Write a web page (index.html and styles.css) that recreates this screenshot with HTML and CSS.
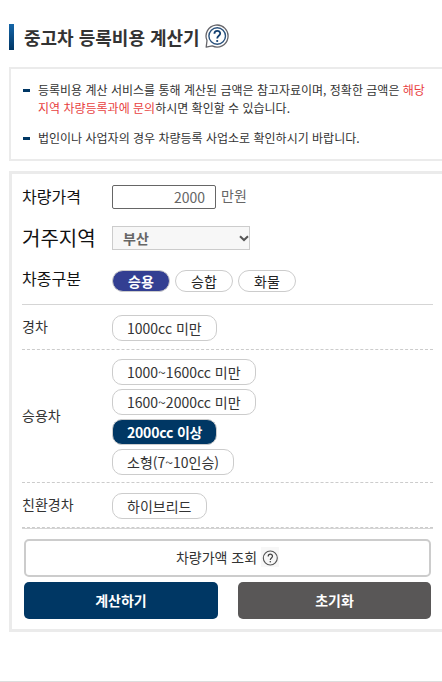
FILE: index.html
```
<!DOCTYPE html>
<html lang="ko">

<head>
	<meta charset="utf-8" />
	<title>중고차 등록비용 계산기</title>
	<meta name="viewport" content="width=device-width, initial-scale=1" />
	<link rel="stylesheet" href="styles.css">
</head>

<body>
	<main>
		<header class="title">
			<h1>중고차 등록비용 계산기</h1>
			<svg class="help" width="24" height="25" viewBox="0 0 24 25" fill="none">
				<path d="M1.2 23.2 L2 16.5 A11 11 0 1 1 7.2 21.9 Z" stroke="#66666b" stroke-width="1.3" stroke-linejoin="round" />
				<circle cx="12.2" cy="12" r="8.3" stroke="#2a527d" stroke-width="1.4" />
				<path d="M9.4 9.8 C9.4 5.9 15.2 5.9 15.2 9.4 C15.2 11.7 12.2 11.8 12.2 14.4" stroke="#123f70" stroke-width="1.8" />
				<circle cx="12.2" cy="17" r="1.1" fill="#123f70" />
			</svg>
		</header>

		<ul class="notice">
			<li>등록비용 계산 서비스를 통해 계산된 금액은 참고자료이며, 정확한 금액은 <em>해당<br>지역 차량등록과에 문의</em>하시면 확인할 수 있습니다.</li>
			<li>법인이나 사업자의 경우 차량등록 사업소로 확인하시기 바랍니다.</li>
		</ul>

		<form class="calc">
			<div class="field price">
				<label for="price">차량가격</label>
				<input id="price" type="text" value="2000">
				<span class="unit">만원</span>
			</div>
			<div class="field region">
				<label for="region">거주지역</label>
				<div class="select">
					<select id="region">
						<option>부산</option>
					</select>
					<svg class="arrow" width="10" height="7" viewBox="0 0 10 7" fill="none">
						<path d="M1 1.2 L5 5 L9 1.2" stroke="#555" stroke-width="2" />
					</svg>
				</div>
			</div>
			<div class="field kind">
				<span class="label">차종구분</span>
				<div class="kinds">
					<a class="pill on">승용</a>
					<a class="pill">승합</a>
					<a class="pill">화물</a>
				</div>
			</div>

			<div class="types">
				<div class="type">
					<span class="name">경차</span>
					<div class="options"><a class="option">1000cc 미만</a></div>
				</div>
				<div class="type sedan">
					<span class="name">승용차</span>
					<div class="options">
						<a class="option">1000~1600cc 미만</a>
						<a class="option">1600~2000cc 미만</a>
						<a class="option on">2000cc 이상</a>
						<a class="option">소형(7~10인승)</a>
					</div>
				</div>
				<div class="type">
					<span class="name">친환경차</span>
					<div class="options"><a class="option hybrid">하이브리드</a></div>
				</div>
			</div>

			<div class="buttons">
				<button type="button" class="lookup">차량가액 조회
					<svg width="18" height="20" viewBox="0 0 18 20" fill="none">
						<path d="M0 0h18v20H0z" fill="#f7f7f7" />
						<circle cx="9.3" cy="11" r="7" stroke="#555" stroke-width="1.1" />
						<path d="M7.2 9.4 C7.2 6.5 11.5 6.5 11.5 9.2 C11.5 10.9 9.3 11 9.3 13" stroke="#444" stroke-width="1.2" />
						<circle cx="9.3" cy="14.8" r=".8" fill="#444" />
					</svg>
				</button>
				<button type="button" class="submit">계산하기</button>
				<button type="button" class="reset">초기화</button>
			</div>
		</form>
	</main>
	<footer></footer>
</body>

</html>
```
FILE: styles.css
```
* {
	box-sizing: border-box;
}

body {
	margin: 0;
	height: 682px;
	overflow: hidden;
	background: #fff;
	color: #333;
	font-family: "Noto Sans CJK KR", sans-serif;
	font-size: 14px;
}

main {
	height: 681px;
	padding: 24px 0 0 9px;
}

.title {
	display: flex;
	height: 26px;
	border-left: 5px solid #0b4a85;
	border-image: linear-gradient(#1668ab, #003462) 1;
	padding-left: 10px;
}

h1 {
	margin: 0;
	font-size: 18px;
	font-weight: 700;
	line-height: 27px;
}

.help {
	margin: 0 0 0 5px;
}

.notice {
	height: 94px;
	margin: 17px 0 10px;
	padding: 12px 0 0 27px;
	border: 2px solid #ebebeb;
	border-right: 0;
	list-style: none;
	font-size: 12px;
	line-height: 18px;
	white-space: nowrap;
}

.notice li {
	position: relative;
	margin-bottom: 12px;
}

.notice li::before {
	content: "";
	position: absolute;
	left: -15px;
	top: 8px;
	width: 7px;
	height: 3px;
	background: #003764;
}

.notice em {
	font-style: normal;
	color: #e8423f;
}

.calc {
	height: 461px;
	padding: 0 9px 0 10px;
	border: 3px solid #ebebeb;
	border-right: 0;
}

.field {
	display: flex;
	align-items: center;
	height: 41px;
}

.field label,
.field .label {
	width: 90px;
	padding-bottom: 2px;
	color: #111;
	font-size: 16px;
}

.price {
	height: 44px;
	padding-top: 2px;
}

.price input {
	width: 104px;
	height: 24px;
	padding: 0 10px 1px 0;
	border: 1px solid #666;
	border-radius: 2px;
	background: #fff;
	color: #666;
	font: 14px "Noto Sans CJK KR", sans-serif;
	text-align: right;
}

.unit {
	margin: -4px 0 0 5px;
	color: #666;
}

.region {
	height: 40px;
}

.region label {
	font-size: 20px;
}

.select {
	position: relative;
	height: 24px;
}

.region select {
	width: 138px;
	height: 24px;
	padding: 0 0 0 10px;
	border: 1px solid #ccc;
	border-radius: 0;
	background: #f7f7f7;
	color: #666;
	font: 700 14px "Noto Sans CJK KR", sans-serif;
	appearance: none;
}

.arrow {
	position: absolute;
	right: 1px;
	top: 9px;
}

.kind {
	height: 46px;
	padding-bottom: 4px;
}

.kinds {
	display: flex;
	gap: 5px;
	padding-top: 4px;
}

.pill {
	width: 58px;
	height: 22px;
	border: 1px solid #ccc;
	border-radius: 11px;
	color: #222;
	line-height: 21px;
	text-align: center;
}

.pill.on {
	background: #333f92;
	color: #fff;
	font-weight: 700;
}

.types {
	border-top: 1px solid #d5d5d5;
	border-bottom: 1px solid #d5d5d5;
}

.type {
	display: flex;
	align-items: center;
	height: 45px;
	border-bottom: 1px dashed #ccc;
}

.type.sedan {
	height: 133px;
}

.name {
	width: 90px;
	padding-bottom: 2px;
}

.options {
	display: flex;
	flex-direction: column;
	align-items: flex-start;
	gap: 4px;
	padding-top: 2px;
}

.option {
	height: 26px;
	padding: 0 14px;
	border: 1px solid #ccc;
	border-radius: 10px;
	line-height: 25px;
}

.option.on {
	background: #003764;
	color: #fff;
	font-weight: 700;
	letter-spacing: -0.2px;
}

.option.hybrid {
	padding-right: 15px;
}

.buttons {
	display: grid;
	grid-template-columns: 194px 193px;
	gap: 5px 20px;
	padding: 10px 2px 0;
}

.buttons button {
	height: 37px;
	padding: 0 0 2px;
	border: 0;
	border-radius: 5px;
	color: #fff;
	font: 700 14px "Noto Sans CJK KR", sans-serif;
}

.buttons .lookup {
	display: flex;
	grid-column: 1 / 3;
	align-items: center;
	justify-content: center;
	gap: 4px;
	height: 38px;
	border: 2px solid #ccc;
	background: #fff;
	color: #333;
	font-weight: 400;
}

.buttons .submit {
	background: #003764;
}

.buttons .reset {
	background: #595757;
}

footer {
	height: 1px;
	background: #ddd;
}
```
